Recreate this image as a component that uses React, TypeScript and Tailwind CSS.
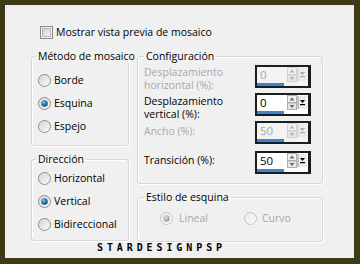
import React from 'react';

const FONT = "font-['Open_Sans','Lato',sans-serif]";

function Radio({ checked, disabled }: { checked?: boolean; disabled?: boolean }) {
  const id = `r${checked ? 1 : 0}${disabled ? 1 : 0}`;
  return (
    <svg width="13" height="13" viewBox="0 0 13 13" className="shrink-0">
      <defs>
        <linearGradient id={`${id}bg`} x1="0" y1="0" x2="1" y2="1">
          <stop offset="0" stopColor={disabled ? '#e6e6e6' : '#cfcfcf'} />
          <stop offset="1" stopColor="#ffffff" />
        </linearGradient>
        <radialGradient id={`${id}dot`} cx="0.4" cy="0.35" r="0.7">
          <stop offset="0" stopColor={disabled ? '#e0e0e0' : '#7fd0f0'} />
          <stop offset="0.5" stopColor={disabled ? '#b8b8b8' : '#2a7ab0'} />
          <stop offset="1" stopColor={disabled ? '#9a9a9a' : '#0d3f6a'} />
        </radialGradient>
      </defs>
      <circle cx="6.5" cy="6.5" r="6" fill={`url(#${id}bg)`} stroke={disabled ? '#c4c4c4' : '#8a8a8a'} />
      <circle cx="6.5" cy="6.5" r="4.6" fill="none" stroke={disabled ? '#f2f2f2' : '#e8e8e8'} strokeWidth="0.8" />
      {checked && <circle cx="6.5" cy="6.5" r="3.2" fill={`url(#${id}dot)`} />}
    </svg>
  );
}

function Checkbox() {
  return (
    <svg width="13" height="13" viewBox="0 0 13 13" className="shrink-0">
      <defs>
        <linearGradient id="cbg" x1="0" y1="0" x2="1" y2="1">
          <stop offset="0" stopColor="#cdcdcd" />
          <stop offset="1" stopColor="#f7f7f7" />
        </linearGradient>
      </defs>
      <rect x="0.5" y="0.5" width="12" height="12" fill="#f4f4f4" stroke="#8a8a8a" />
      <rect x="2.5" y="2.5" width="8" height="8" fill="url(#cbg)" stroke="#b8b8b8" />
    </svg>
  );
}

function Spin({ value, disabled }: { value: string; disabled?: boolean }) {
  const arrow = disabled ? '#b4b4b4' : '#5a6a80';
  return (
    <div
      className={`w-[56px] h-[23px] border-2 border-r-[3px] border-[#1c1c1c] flex flex-col ${
        disabled ? 'bg-[#f3f3f3]' : 'bg-white'
      }`}
    >
      <div className="flex h-[16px]">
        <span
          className={`w-[30px] pl-[3px] text-[11.5px] leading-[15px] ${disabled ? 'text-[#a8a8a8]' : 'text-black'}`}
        >
          {value}
        </span>
        <div className="w-[10px] h-[15px] flex flex-col">
          <svg width="10" height="8" viewBox="0 0 10 8">
            <rect x="0.5" y="0.5" width="9" height="7" fill="#f0f0f0" stroke={disabled ? '#d0d0d0' : '#b0b0b0'} />
            <path d="M5 2.2 L7.4 5.4 L2.6 5.4 Z" fill={arrow} />
          </svg>
          <svg width="10" height="7" viewBox="0 0 10 7">
            <rect x="0.5" y="0" width="9" height="6.5" fill="#e6e6e6" stroke={disabled ? '#d0d0d0' : '#b0b0b0'} />
            <path d="M2.6 2 L7.4 2 L5 5 Z" fill={arrow} />
          </svg>
        </div>
        <svg width="11" height="15" viewBox="0 0 11 15">
          <rect x="1" y="1" width="9" height="13" fill="#ececec" />
          <line x1="1" y1="1" x2="1" y2="14" stroke={disabled ? '#c8c8c8' : '#8c8c8c'} />
          <path d="M3 5 L8 5 L5.5 8 Z" fill={disabled ? '#a8a8a8' : '#000'} />
          <rect x="3" y="9" width="5" height="1.2" fill={disabled ? '#a8a8a8' : '#000'} />
        </svg>
      </div>
      <div className="h-[3px]">
        <div className="h-full w-[27px] bg-[#3a86d4]" />
      </div>
    </div>
  );
}

function Group({
  label,
  className,
  children,
}: {
  label: string;
  className: string;
  children: React.ReactNode;
}) {
  return (
    <fieldset
      className={`min-w-0 border border-[#d6d6d6] rounded-[3px] shadow-[inset_1px_1px_0_#ffffff,1px_1px_0_#ffffff] ${className}`}
    >
      <legend className="px-[2px] whitespace-nowrap text-[10.5px] leading-[13px] text-black">{label}</legend>
      {children}
    </fieldset>
  );
}

function RadioRow({
  label,
  checked,
  disabled,
  gap = 'gap-[3px]',
}: {
  label: string;
  checked?: boolean;
  disabled?: boolean;
  gap?: string;
}) {
  return (
    <div className={`flex items-center h-[23px] ${gap}`}>
      <Radio checked={checked} disabled={disabled} />
      <span className={`text-[10.5px] whitespace-nowrap ${disabled ? 'text-[#a8a8a8]' : 'text-black'}`}>
        {label}
      </span>
    </div>
  );
}

export default function App() {
  return (
    <div className={`w-[360px] h-[264px] bg-[#3d3b16] pt-[5px] pl-[5px] ${FONT}`}>
      <div className="w-[349px] h-[253px] bg-[#f0f0f0] flex flex-col">
        {/* Preview checkbox */}
        <div className="flex items-center gap-[3px] pl-[35px] pt-[21px] h-[34px]">
          <Checkbox />
          <span className="text-[10.5px] leading-[13px] text-black">Mostrar vista previa de mosaico</span>
        </div>

        <div className="flex items-start gap-[8px] pl-[26px] mt-[11px]">
          {/* Left column */}
          <div className="w-[98px] flex flex-col gap-[7px]">
            <Group label="Método de mosaico" className="h-[96px] px-[4px]">
              <div className="pt-[6px] pl-[2px]">
                <RadioRow label="Borde" />
                <RadioRow label="Esquina" checked />
                <RadioRow label="Espejo" />
              </div>
            </Group>
            <Group label="Dirección" className="h-[88px] px-[4px]">
              <div className="pt-[1px] pl-[2px]">
                <RadioRow label="Horizontal" />
                <RadioRow label="Vertical" checked />
                <RadioRow label="Bidireccional" />
              </div>
            </Group>
          </div>

          {/* Right column */}
          <div className="w-[186px] flex flex-col gap-[7px]">
            <Group label="Configuración" className="h-[134px] px-[6px]">
              <div className="pt-[2px] flex flex-col text-[10.5px] leading-[13px]">
                <div className="flex h-[28px]">
                  <span className="w-[111px] pt-[1px] text-[#a8a8a8]">
                    Desplazamiento
                    <br />
                    horizontal (%):
                  </span>
                  <Spin value="0" disabled />
                </div>
                <div className="flex h-[28px]">
                  <span className="w-[111px] pt-[2px] text-black">
                    Desplazamiento
                    <br />
                    vertical (%):
                  </span>
                  <Spin value="0" />
                </div>
                <div className="flex h-[30px]">
                  <span className="w-[111px] pt-[4px] text-[#a8a8a8]">Ancho (%):</span>
                  <Spin value="50" disabled />
                </div>
                <div className="flex h-[24px]">
                  <span className="w-[111px] pt-[3px] text-black">Transición (%):</span>
                  <Spin value="50" />
                </div>
              </div>
            </Group>
            <Group label="Estilo de esquina" className="h-[51px] px-[6px]">
              <div className="flex pt-[3px] pl-[16px]">
                <div className="w-[84px]">
                  <RadioRow label="Lineal" checked disabled gap="gap-[6px]" />
                </div>
                <RadioRow label="Curvo" disabled gap="gap-[5px]" />
              </div>
            </Group>
          </div>
        </div>

        {/* Watermark */}
        <div className="pl-[92px] mt-[1px] font-['DejaVu_Sans_Mono',monospace] font-bold text-[10px] leading-[9px] tracking-[3.9px] text-black">
          STARDESIGNPSP
        </div>
      </div>
    </div>
  );
}
